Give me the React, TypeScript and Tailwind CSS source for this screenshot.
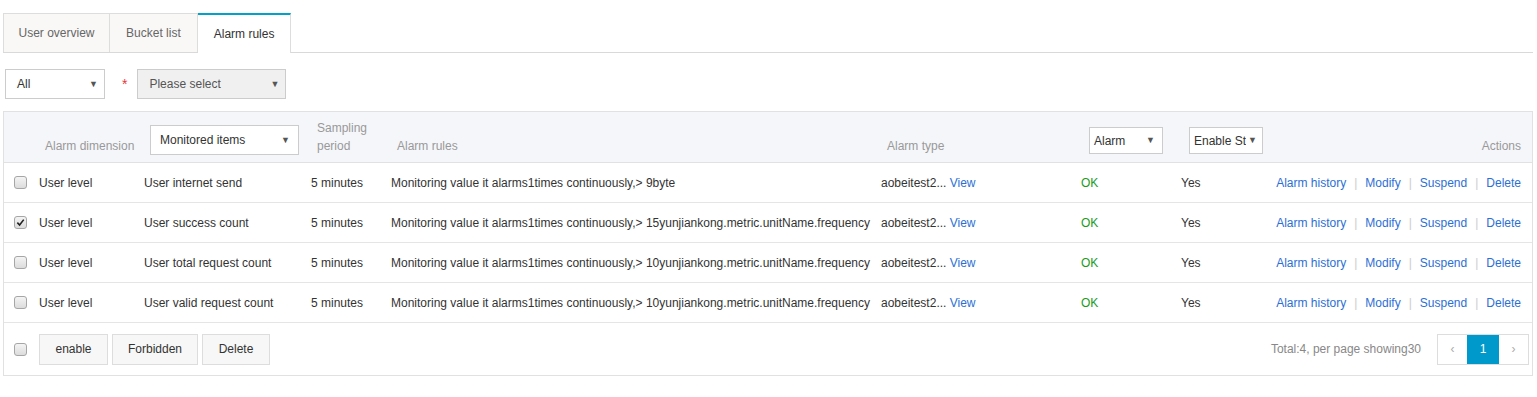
import { useState } from "react";

interface Rule {
  item: string;
  rule: string;
  checked: boolean;
}

const rules: Rule[] = [
  { item: "User internet send", rule: "Monitoring value it alarms1times continuously,> 9byte", checked: false },
  {
    item: "User success count",
    rule: "Monitoring value it alarms1times continuously,> 15yunjiankong.metric.unitName.frequency",
    checked: true,
  },
  {
    item: "User total request count",
    rule: "Monitoring value it alarms1times continuously,> 10yunjiankong.metric.unitName.frequency",
    checked: false,
  },
  {
    item: "User valid request count",
    rule: "Monitoring value it alarms1times continuously,> 10yunjiankong.metric.unitName.frequency",
    checked: false,
  },
];

const cols = "grid grid-cols-[29px_105px_167px_80px_490px_200px_100px_97px_1fr]";

const Check = ({ checked }: { checked?: boolean }) => (
  <span className="flex h-[13px] w-[13px] items-center justify-center rounded-[3px] border border-[#a6a6a6] bg-gradient-to-b from-[#f4f4f4] to-[#dcdcdc]">
    {checked && (
      <svg viewBox="0 0 10 10" className="h-[9px] w-[9px]">
        <path d="M1.5 5.2 L4 7.8 L8.6 1.8" fill="none" stroke="#222" strokeWidth="1.8" />
      </svg>
    )}
  </span>
);

const Caret = () => <span className="shrink-0 text-[9px] leading-none text-[#555]">▼</span>;

const Tabs = () => {
  const [active, setActive] = useState(2);
  const tabs = ["User overview", "Bucket list", "Alarm rules"];
  return (
    <div className="flex border-b border-[#d9d9d9] pt-[13px]">
      {tabs.map((t, i) => (
        <button
          key={t}
          onClick={() => setActive(i)}
          className={
            i === active
              ? "-mb-px h-[40px] border-t-2 border-r border-[#ddd] border-t-[#00a2ca] bg-white px-[16px] text-[#333]"
              : "h-[39px] border-t border-r border-[#ddd] bg-[#f9f8f7] px-[16px] text-[#666] first:border-l first:px-[14.5px]"
          }
        >
          {t}
        </button>
      ))}
    </div>
  );
};

const App = () => {
  return (
    <div className="min-h-[397px] bg-white pl-[3px] pr-[4px] font-['Liberation_Sans',Arial,sans-serif] text-[12px] text-[#333]">
      <Tabs />

      {/* Filters */}
      <div className="flex items-center pl-[2px] pt-[16px] pb-[12px]">
        <div className="flex h-[30px] w-[100px] items-center justify-between border border-[#ccc] bg-white pl-[11px] pr-[6px]">
          <span>All</span>
          <Caret />
        </div>
        <span className="ml-[17px] mr-[10px] text-[14px] text-[#e4393c]">*</span>
        <div className="flex h-[30px] w-[149px] items-center justify-between border border-[#ccc] bg-[#f0f0f0] pl-[11px] pr-[6px] text-[#555]">
          <span>Please select</span>
          <Caret />
        </div>
      </div>

      {/* Table */}
      <div className="border border-[#e1e1e1]">
        <div className={`${cols} h-[51px] items-end border-b border-[#e1e1e1] bg-[#f5f6fa] pb-[7px] text-[#999]`}>
          <div />
          <div className="pl-[12px]">Alarm dimension</div>
          <div className="pl-[12px]">
            <div className="flex h-[30px] w-[149px] items-center justify-between border border-[#ccc] bg-white pl-[9px] pr-[8px] text-[#333]">
              <span>Monitored items</span>
              <Caret />
            </div>
          </div>
          <div className="pl-[12px] leading-[18px]">
            Sampling
            <br />
            period
          </div>
          <div className="pl-[12px]">Alarm rules</div>
          <div className="pl-[12px]">Alarm type</div>
          <div className="mb-[1px] pl-[14px]">
            <div className="flex h-[27px] w-[74px] items-center justify-between border border-[#ccc] bg-white pl-[4px] pr-[7px] text-[#333]">
              <span>Alarm</span>
              <Caret />
            </div>
          </div>
          <div className="mb-[1px] pl-[14px]">
            <div className="flex h-[27px] w-[74px] items-center justify-between border border-[#ccc] bg-white pl-[4px] pr-[5px] text-[#333]">
              <span className="w-[52px] overflow-hidden whitespace-nowrap">Enable Status</span>
              <Caret />
            </div>
          </div>
          <div className="pr-[11px] text-right">Actions</div>
        </div>

        {rules.map((r, i) => (
          <div key={i} className={`${cols} h-[40px] items-center border-b border-[#e5e5e5]`}>
            <div className="flex pl-[10px]">
              <Check checked={r.checked} />
            </div>
            <div className="pl-[6px]">User level</div>
            <div className="pl-[6px]">{r.item}</div>
            <div className="pl-[6px]">5 minutes</div>
            <div className="whitespace-nowrap pl-[6px]">{r.rule}</div>
            <div className="pl-[6px]">
              aobeitest2... <a className="text-[#2b6fd5]">View</a>
            </div>
            <div className="pl-[6px] text-[#1a9c1a]">OK</div>
            <div className="pl-[6px]">Yes</div>
            <div className="flex justify-end whitespace-nowrap pr-[11px] text-[#2b6fd5]">
              <a>Alarm history</a>
              <span className="mx-[8px] text-[#ccc]">|</span>
              <a>Modify</a>
              <span className="mx-[8px] text-[#ccc]">|</span>
              <a>Suspend</a>
              <span className="mx-[8px] text-[#ccc]">|</span>
              <a>Delete</a>
            </div>
          </div>
        ))}

        {/* Footer */}
        <div className="flex h-[52px] items-center pl-[10px] pr-[3px]">
          <Check />
          <div className="ml-[12px] flex gap-[4px]">
            <button className="h-[31px] w-[69px] border border-[#ddd] bg-[#f7f7f7] text-[#333]">enable</button>
            <button className="h-[31px] w-[86px] border border-[#ddd] bg-[#f7f7f7] text-[#333]">Forbidden</button>
            <button className="h-[31px] w-[68px] border border-[#ddd] bg-[#f7f7f7] text-[#333]">Delete</button>
          </div>
          <span className="ml-auto mr-[16px] text-[#888]">Total:4, per page showing30</span>
          <div className="flex h-[31px] border border-[#ddd]">
            <span className="flex w-[29px] items-center justify-center text-[#aaa]">‹</span>
            <span className="flex w-[32px] items-center justify-center bg-[#0099cc] text-white">1</span>
            <span className="flex w-[29px] items-center justify-center text-[#aaa]">›</span>
          </div>
        </div>
      </div>
    </div>
  );
};

export default App;
